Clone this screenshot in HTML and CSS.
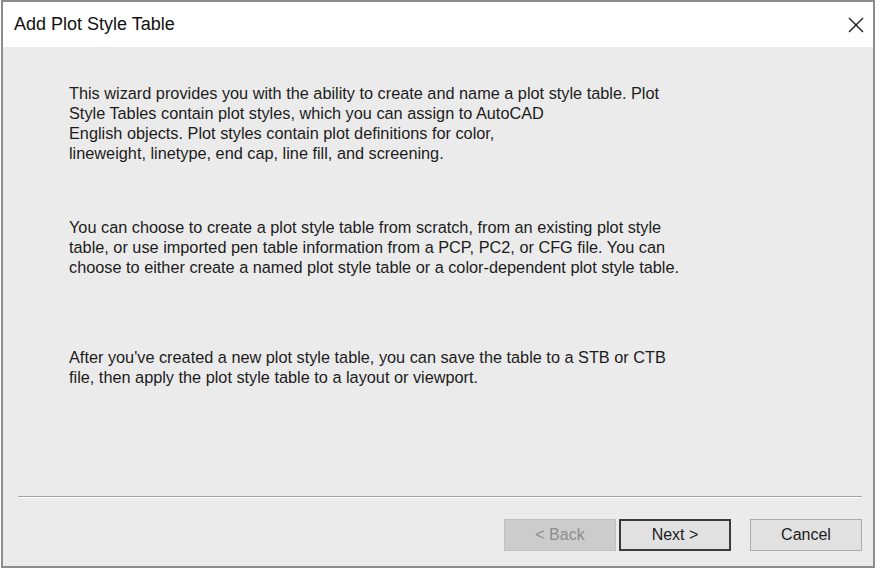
FILE: index.html
```html
<!DOCTYPE html>
<html>
<head>
<meta charset="utf-8">
<link rel="stylesheet" href="styles.css">
</head>
<body>
<div class="dialog">
  <div class="titlebar">
    <span class="title">Add Plot Style Table</span>
    <svg class="close" width="16" height="16" viewBox="0 0 16 16"><path d="M1 1 L15 15 M15 1 L1 15" stroke="#1a1a1a" stroke-width="1.4" fill="none"/></svg>
  </div>
  <div class="main">
    <p class="p1">This wizard provides you with the ability to create and name a plot style table. Plot<br>Style Tables contain plot styles, which you can assign to AutoCAD<br>English objects. Plot styles contain plot definitions for color,<br>lineweight, linetype, end cap, line fill, and screening.</p>
    <p class="p2">You can choose to create a plot style table from scratch, from an existing plot style<br>table, or use imported pen table information from a PCP, PC2, or CFG file. You can<br>choose to either create a named plot style table or a color-dependent plot style table.</p>
    <p class="p3">After you've created a new plot style table, you can save the table to a STB or CTB<br>file, then apply the plot style table to a layout or viewport.</p>
  </div>
  <div class="separator"></div>
  <div class="buttons">
    <button class="btn disabled">&lt; Back</button>
    <button class="btn default">Next &gt;</button>
    <button class="btn cancel">Cancel</button>
  </div>
</div>
</body>
</html>
```
FILE: styles.css
```css
html, body {
  margin: 0;
  padding: 0;
  background: #ffffff;
}
body {
  font-family: "Liberation Sans", Arial, sans-serif;
  color: #1c1c1c;
}
.dialog {
  box-sizing: border-box;
  margin-left: 1px;
  width: 874px;
  height: 568px;
  border: 2px solid #8c8c8c;
  background: #ebebeb;
  display: flex;
  flex-direction: column;
}
.titlebar {
  height: 45px;
  background: #ffffff;
  display: flex;
  align-items: center;
  justify-content: space-between;
  padding: 0 9px 0 11px;
}
.title {
  font-size: 18px;
  color: #111;
}
.close {
  display: block;
}
.main {
  flex: 1;
  padding: 36px 0 0 66px;
  font-size: 16.3px;
  line-height: 20px;
}
.main p {
  margin: 0;
}
.p2 {
  margin-top: 54px !important;
}
.p3 {
  margin-top: 70px !important;
}
.separator {
  height: 1px;
  background: #a3a3a3;
  border-bottom: 1px solid #ffffff;
  margin: 0 11px 0 15px;
}
.buttons {
  display: flex;
  justify-content: flex-end;
  padding: 21px 11px 15px 0;
}
.btn {
  box-sizing: border-box;
  width: 112px;
  height: 32px;
  font-family: "Liberation Sans", Arial, sans-serif;
  font-size: 16px;
  background: #e1e1e1;
  border: 1px solid #adadad;
  color: #1c1c1c;
  padding: 0;
  margin: 0;
}
.btn.disabled {
  background: #cccccc;
  border-color: #bfbfbf;
  color: #8d8d8d;
}
.btn.default {
  margin-left: 3px;
  border: 2px solid #3a3a3a;
}
.btn.cancel {
  margin-left: 19px;
}
```
